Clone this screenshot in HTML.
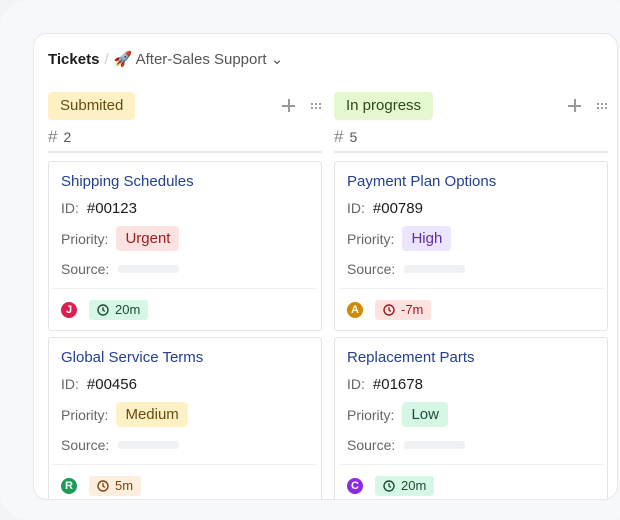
<!DOCTYPE html>
<html><head><meta charset="utf-8"><style>
*{box-sizing:border-box;margin:0;padding:0}
body{width:620px;height:498px;overflow:hidden;background:#f3f4f6;font-family:"Liberation Sans",sans-serif;position:relative}
.bg{position:absolute;left:0;top:0;width:640px;height:520px;border-radius:28px;background:#f7f8fa}
.panel{position:absolute;left:33px;top:33px;width:585px;height:467px;background:#fff;border:1px solid #e6e7ea;border-radius:14px;overflow:hidden}
.abs{position:absolute}
.crumb{left:14px;top:16px;font-size:15px;color:#222;white-space:nowrap}
.crumb b{font-weight:bold;color:#1c1c1c}
.crumb .sep{color:#ccc;margin:0 5px}
.crumb .sub{color:#555}
.tag{position:absolute;height:28px;line-height:28px;padding:0 12px;border-radius:4px;font-size:15px}
.cnt{position:absolute;font-size:14px;color:#555}
.cnt span{font-size:17px;color:#888;margin-right:6px}
.line{position:absolute;height:2px;background:#e8e9ec}
.plus{position:absolute;width:13px;height:13px}
.plus:before,.plus:after{content:"";position:absolute;background:#999}
.plus:before{left:6px;top:0;width:1.5px;height:13px}
.plus:after{top:6px;left:0;height:1.5px;width:13px}
.dots{position:absolute;width:12px;height:8px;background-image:radial-gradient(circle,#999 1px,transparent 1.3px);background-size:4px 4px}
.card{position:absolute;width:274px;height:170px;border:1px solid #e3e4e7;border-radius:3px;background:#fff}
.card .t{position:absolute;left:12px;top:11px;font-size:15px;color:#24408e}
.card .id{position:absolute;left:12px;top:38px;font-size:14px;color:#666}
.card .id span{color:#1b1b1b;font-size:15px;margin-left:8px}
.card .pr{position:absolute;left:12px;top:64px;font-size:14px;color:#666;display:flex;align-items:center}
.card .pr span{display:inline-block;margin-left:8px;padding:0 9px;height:25px;line-height:25px;border-radius:4px;font-size:15px}
.card .src{position:absolute;left:12px;top:99px;font-size:14px;color:#666}
.card .bar{position:absolute;left:69px;top:103px;width:61px;height:8px;background:#f0f1f3;border-radius:3px}
.card .hr{position:absolute;left:4px;right:4px;top:126px;height:1px;background:#eeeff1}
.card .av{position:absolute;left:12px;top:140px;width:16px;height:16px;border-radius:50%;color:#fff;font-size:11px;font-weight:bold;text-align:center;line-height:16px}
.card .tm{position:absolute;left:40px;top:138px;height:20px;line-height:20px;padding:0 8px 0 8px;border-radius:3px;font-size:13px;display:flex;align-items:center;gap:6px}
.tm svg{width:12px;height:12px}
</style></head><body>
<div class="bg"></div>
<div class="panel">
 <div class="abs crumb"><b>Tickets</b><span class="sep">/</span><span class="sub">🚀 After-Sales Support ⌄</span></div>

 <div class="tag" style="left:14px;top:58px;background:#fdf1c5;color:#6b4a12">Submited</div>
 <div class="plus" style="left:248px;top:65px"></div>
 <div class="dots" style="left:276px;top:68px"></div>
 <div class="cnt" style="left:14px;top:93px"><span>#</span>2</div>
 <div class="line" style="left:14px;width:274px;top:117px"></div>

 <div class="tag" style="left:300px;top:58px;background:#e5f8cf;color:#2b4a18">In progress</div>
 <div class="plus" style="left:534px;top:65px"></div>
 <div class="dots" style="left:562px;top:68px"></div>
 <div class="cnt" style="left:300px;top:93px"><span>#</span>5</div>
 <div class="line" style="left:300px;width:274px;top:117px"></div>

 <div class="card" style="left:14px;top:127px">
  <div class="t">Shipping Schedules</div>
  <div class="id">ID:<span>#00123</span></div>
  <div class="pr">Priority:<span style="background:#fde2e2;color:#9b1c1c">Urgent</span></div>
  <div class="src">Source:</div><div class="bar"></div><div class="hr"></div>
  <div class="av" style="background:#dc1f4e">J</div>
  <div class="tm" style="background:#d6f7e6;color:#1e4d33"><svg viewBox="0 0 12 12" fill="none" stroke="currentColor" stroke-width="1.4"><circle cx="6" cy="6" r="5"/><path d="M6 3.2V6l1.8 1.4"/></svg>20m</div>
 </div>
 <div class="card" style="left:300px;top:127px">
  <div class="t">Payment Plan Options</div>
  <div class="id">ID:<span>#00789</span></div>
  <div class="pr">Priority:<span style="background:#ede5fd;color:#5b2ea6">High</span></div>
  <div class="src">Source:</div><div class="bar"></div><div class="hr"></div>
  <div class="av" style="background:#d08a05">A</div>
  <div class="tm" style="background:#fde2e2;color:#9b1c1c"><svg viewBox="0 0 12 12" fill="none" stroke="currentColor" stroke-width="1.4"><circle cx="6" cy="6" r="5"/><path d="M6 3.2V6l1.8 1.4"/></svg>-7m</div>
 </div>
 <div class="card" style="left:14px;top:303px">
  <div class="t">Global Service Terms</div>
  <div class="id">ID:<span>#00456</span></div>
  <div class="pr">Priority:<span style="background:#fdf1c5;color:#6b4a12">Medium</span></div>
  <div class="src">Source:</div><div class="bar"></div><div class="hr"></div>
  <div class="av" style="background:#1f9a57">R</div>
  <div class="tm" style="background:#fdeedd;color:#7a4513"><svg viewBox="0 0 12 12" fill="none" stroke="currentColor" stroke-width="1.4"><circle cx="6" cy="6" r="5"/><path d="M6 3.2V6l1.8 1.4"/></svg>5m</div>
 </div>
 <div class="card" style="left:300px;top:303px">
  <div class="t">Replacement Parts</div>
  <div class="id">ID:<span>#01678</span></div>
  <div class="pr">Priority:<span style="background:#d6f7e6;color:#1e4d33">Low</span></div>
  <div class="src">Source:</div><div class="bar"></div><div class="hr"></div>
  <div class="av" style="background:#8a2be2">C</div>
  <div class="tm" style="background:#d6f7e6;color:#1e4d33"><svg viewBox="0 0 12 12" fill="none" stroke="currentColor" stroke-width="1.4"><circle cx="6" cy="6" r="5"/><path d="M6 3.2V6l1.8 1.4"/></svg>20m</div>
 </div>
</div>
</body></html>
